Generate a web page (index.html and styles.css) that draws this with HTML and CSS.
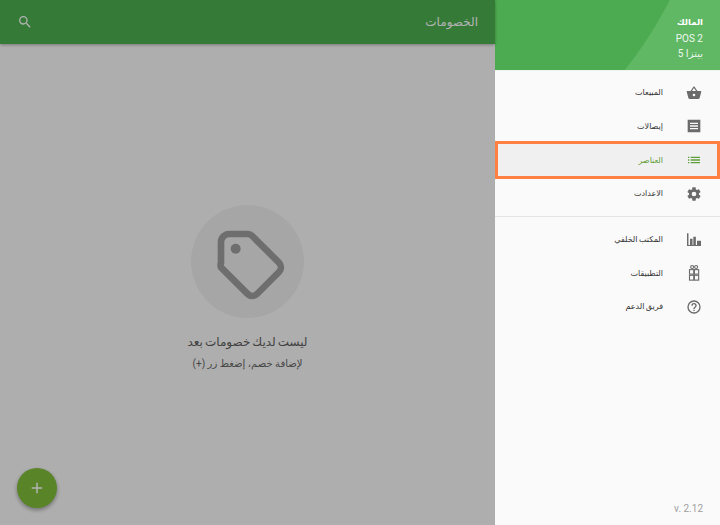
FILE: index.html
```html
<!DOCTYPE html>
<html lang="ar" dir="rtl">
<head>
    <meta charset="UTF-8">
    <meta name="viewport" content="width=device-width, initial-scale=1.0">
    <title>الخصومات</title>
    <link rel="stylesheet" href="styles.css">
</head>
<body>
<div class="app">
    <aside class="drawer">
        <div class="drawer-head">
            <div class="head-owner">المالك</div>
            <div class="head-line">POS 2</div>
            <div class="head-line">بيتزا 5</div>
        </div>
        <nav class="menu">
            <a class="menu-item">
                <svg class="menu-icon" viewBox="0 0 24 24"><path d="M17.21 9l-4.38-6.56a1 1 0 0 0-1.66 0L6.79 9H2a1 1 0 0 0-1 1l.04.27 2.54 9.27A2 2 0 0 0 5.5 21h13a2 2 0 0 0 1.93-1.46l2.54-9.27L23 10a1 1 0 0 0-1-1h-4.79zM9 9l3-4.4L15 9H9zm3 8a2 2 0 1 1 0-4 2 2 0 0 1 0 4z"/></svg>
                <span>المبيعات</span>
            </a>
            <a class="menu-item">
                <svg class="menu-icon" viewBox="0 0 24 24"><path d="M2.5 2.5h19v19h-19z M6 7v2h12V7z M6 11v2h12v-2z M6 15v2h12v-2z" fill-rule="evenodd"/></svg>
                <span>إيصالات</span>
            </a>
            <a class="menu-item active">
                <svg class="menu-icon" viewBox="0 0 24 24"><path d="M3 13h2v-2H3v2zm0 4h2v-2H3v2zm0-8h2V7H3v2zm4 4h14v-2H7v2zm0 4h14v-2H7v2zM7 7v2h14V7H7z"/></svg>
                <span>العناصر</span>
            </a>
            <a class="menu-item">
                <svg class="menu-icon" viewBox="0 0 24 24"><path d="M19.43 12.98c.04-.32.07-.64.07-.98s-.03-.66-.07-.98l2.11-1.65a.5.5 0 0 0 .12-.64l-2-3.46a.5.5 0 0 0-.61-.22l-2.49 1a7.3 7.3 0 0 0-1.69-.98l-.38-2.65A.49.49 0 0 0 14 2h-4a.49.49 0 0 0-.49.42l-.38 2.65c-.61.25-1.17.59-1.69.98l-2.49-1a.5.5 0 0 0-.61.22l-2 3.46a.49.49 0 0 0 .12.64l2.11 1.65c-.04.32-.07.65-.07.98s.03.66.07.98l-2.11 1.65a.5.5 0 0 0-.12.64l2 3.46c.12.22.39.3.61.22l2.49-1c.52.4 1.08.73 1.69.98l.38 2.65c.03.24.24.42.49.42h4c.25 0 .46-.18.49-.42l.38-2.65c.61-.25 1.17-.59 1.69-.98l2.49 1c.23.09.49 0 .61-.22l2-3.46a.5.5 0 0 0-.12-.64l-2.11-1.65zM12 15.5a3.5 3.5 0 1 1 0-7 3.5 3.5 0 0 1 0 7z"/></svg>
                <span>الاعدادت</span>
            </a>
            <div class="menu-divider"></div>
            <a class="menu-item">
                <svg class="menu-icon" viewBox="0 0 24 24"><path d="M1.500 2h2.200v19H1.500z M3 19.600h19.500V21H3z M6 10h3.800v10H6z M11 7h3.800v13H11z M16.500 13h6v7h-6z"/></svg>
                <span>المكتب الخلفي</span>
            </a>
            <a class="menu-item">
                <svg class="menu-icon tall stroke" viewBox="0 0 24 24"><rect x="6" y="7.500" width="5.700" height="6"/><rect x="12.500" y="7.500" width="5.700" height="6"/><rect x="6" y="15" width="5.700" height="6.500"/><rect x="12.500" y="15" width="5.700" height="6.500"/><circle cx="9.500" cy="4" r="2"/><circle cx="14.800" cy="4" r="2"/></svg>
                <span>التطبيقات</span>
            </a>
            <a class="menu-item">
                <svg class="menu-icon" viewBox="0 0 24 24"><path d="M11 18h2v-2h-2v2zm1-16a10 10 0 1 0 0 20 10 10 0 0 0 0-20zm0 18a8 8 0 1 1 0-16 8 8 0 0 1 0 16zm0-14a4 4 0 0 0-4 4h2a2 2 0 1 1 4 0c0 2-3 1.75-3 5h2c0-2.25 3-2.5 3-5a4 4 0 0 0-4-4z"/></svg>
                <span>فريق الدعم</span>
            </a>
        </nav>
        <div class="version" dir="ltr">v. 2.12</div>
    </aside>

    <main class="content">
        <header class="topbar">
            <span class="topbar-title">الخصومات</span>
            <svg class="search-icon" viewBox="0 0 24 24"><path d="M15.5 14h-.79l-.28-.27A6.47 6.47 0 0 0 16 9.500 6.500 6.500 0 1 0 9.500 16c1.610 0 3.090-.59 4.230-1.570l.27.28v.79l5 4.990L20.490 19l-4.990-5zm-6 0a4.500 4.500 0 1 1 0-9 4.500 4.500 0 0 1 0 9z"/></svg>
        </header>
        <div class="empty">
            <div class="empty-badge">
                <svg class="tag-icon" viewBox="0 0 24 24"><path class="tag-outline" d="M5.500 3H11a2 2 0 0 1 1.400.6l8 8a2 2 0 0 1 0 2.800l-6.600 6.600a2 2 0 0 1-2.800 0l-8-8A2 2 0 0 1 3 11.600V5.500A2.500 2.500 0 0 1 5.500 3z"/><circle cx="7.400" cy="7.400" r="1.500"/></svg>
            </div>
            <p class="empty-title">ليست لديك خصومات بعد</p>
            <p class="empty-hint">لإضافة خصم، إضغط زر (+)</p>
        </div>
        <button class="fab">
            <svg viewBox="0 0 24 24"><path d="M19 13h-6v6h-2v-6H5v-2h6V5h2v6h6v2z"/></svg>
        </button>
        <div class="scrim"></div>
    </main>
</div>
</body>
</html>
```
FILE: styles.css
```css
html, body {
    margin: 0;
    height: 100%;
}
body {
    font-family: Roboto, "Noto Sans", "DejaVu Sans", sans-serif;
    background-color: #fafafa;
    overflow: hidden;
}
.app {
    display: flex;
    width: 720px;
    height: 525px;
}

/* drawer */
.drawer {
    width: 225px;
    flex: none;
    display: flex;
    flex-direction: column;
    background-color: #fafafa;
}
.drawer-head {
    position: relative;
    overflow: hidden;
    height: 71px;
    box-sizing: border-box;
    padding: 15px 17px 0 0;
    background-color: #60b864;
    color: #fff;
    font-size: 10px;
    border-bottom: 1px solid #edf6ed;
}
.drawer-head::before {
    content: "";
    position: absolute;
    left: -623px;
    top: -614px;
    width: 844px;
    height: 844px;
    border-radius: 50%;
    background-color: #4caa50;
}
.head-owner, .head-line {
    position: relative;
}
.head-owner {
    font-size: 8.5px;
    font-weight: bold;
    height: 17px;
    line-height: 14px;
}
.head-line {
    height: 15px;
    line-height: 14px;
    opacity: 0.9;
}
.menu {
    padding-top: 5px;
}
.menu-item {
    display: flex;
    align-items: center;
    height: 33.6px;
    box-sizing: border-box;
    padding-right: 18px;
    font-size: 8px;
    word-spacing: -0.5px;
    color: #333;
}
.menu-icon {
    width: 16px;
    height: 16px;
    margin-left: 23px;
    fill: #6b6b6b;
    flex: none;
}
.menu-icon.stroke {
    fill: none;
    stroke: #6b6b6b;
    stroke-width: 1.5;
}
.menu-icon.tall {
    width: 18px;
    height: 18px;
    margin: 0 -1px 0 22px;
}
.menu-item.active {
    height: 38px;
    margin: -2px 0;
    position: relative;
    background-color: #f0f0f0;
    border: 3px solid #ff8042;
    padding-right: 15px;
    color: #5f9e3a;
}
.menu-item.active .menu-icon {
    fill: #5f9e3a;
}
.menu-divider {
    height: 1px;
    margin: 5px 0 6px;
    background-color: #e4e4e4;
}
.version {
    margin-top: auto;
    padding: 0 17px 11px 0;
    text-align: right;
    font-size: 10px;
    color: #9e9e9e;
}

/* main area */
.content {
    position: relative;
    flex: 1;
    display: flex;
    flex-direction: column;
    background-color: #fafafa;
}
.topbar {
    display: flex;
    align-items: center;
    justify-content: space-between;
    height: 44px;
    padding: 0 17px;
    background-color: #4caf50;
    box-shadow: 0 1px 3px rgba(0, 0, 0, 0.3);
    color: #fff;
}
.topbar-title {
    font-size: 12px;
}
.search-icon {
    width: 16px;
    height: 16px;
    fill: #fff;
}
.empty {
    display: flex;
    flex-direction: column;
    align-items: center;
    padding-top: 161px;
}
.empty-badge {
    display: flex;
    align-items: center;
    justify-content: center;
    width: 113px;
    height: 113px;
    border-radius: 50%;
    background-color: #eeeeee;
}
.tag-icon {
    width: 80px;
    height: 80px;
    margin: 4px 0 0 6px;
    fill: #9e9e9e;
}
.tag-outline {
    fill: none;
    stroke: #9e9e9e;
    stroke-width: 2;
}
.empty-title {
    margin: 17px 0 0;
    font-size: 12px;
    word-spacing: -1px;
    color: #5c5c5c;
}
.empty-hint {
    margin: 9px 0 0;
    font-size: 10px;
    color: #666;
}
.fab {
    position: absolute;
    left: 17px;
    bottom: 17px;
    display: flex;
    align-items: center;
    justify-content: center;
    width: 40px;
    height: 40px;
    padding: 0;
    border: none;
    border-radius: 50%;
    background-color: #80bd3a;
    box-shadow: 0 2px 4px rgba(0, 0, 0, 0.35);
}
.fab svg {
    width: 18px;
    height: 18px;
    fill: #fff;
}
.scrim {
    position: absolute;
    inset: 0;
    background-color: rgba(0, 0, 0, 0.3);
}
```
